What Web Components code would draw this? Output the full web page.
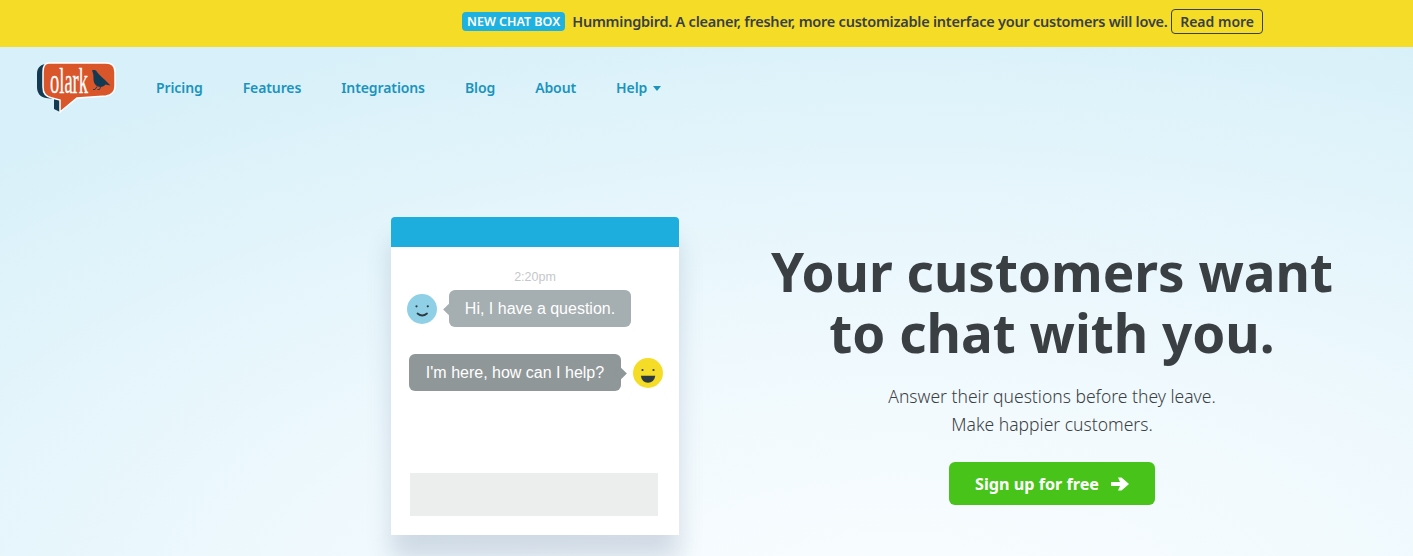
<!DOCTYPE html>
<html>
<head>
<meta charset="utf-8">
<title>Olark</title>
<style>
  html, body { margin: 0; height: 556px; overflow: hidden; }
  body {
    font-family: "Noto Sans", "Open Sans", sans-serif;
    background: radial-gradient(ellipse 1350px 620px at 900px 620px, #fafdff 0%, #eff9fd 45%, #dff3fa 85%, #d8f0f9 100%) #d8f0f9;
  }
  site-page { height: 556px; }
</style>
</head>
<body>
<site-page>
  <promo-bar slot="top" label="NEW CHAT BOX" link="Read more">Hummingbird. A cleaner, fresher, more customizable interface your customers will love.</promo-bar>
  <site-nav slot="top"></site-nav>
  <chat-demo slot="left"></chat-demo>
  <hero-copy slot="right"></hero-copy>
</site-page>

<script>
class SitePage extends HTMLElement {
  constructor() {
    super();
    this.attachShadow({ mode: 'open' });
    this.shadowRoot.innerHTML = `
      <style>
        :host { display: block; }
        .hero {
          display: grid;
          grid-template-columns: 288px 566px;
          column-gap: 90px;
          padding: 102px 0 0 391px;
          align-items: start;
        }
      </style>
      <slot name="top"></slot>
      <div class="hero">
        <slot name="left"></slot>
        <slot name="right"></slot>
      </div>
    `;
  }
}

class PromoBar extends HTMLElement {
  constructor() {
    super();
    this.attachShadow({ mode: 'open' });
    this.shadowRoot.innerHTML = `
      <style>
        :host {
          display: flex;
          align-items: center;
          height: 47px;
          box-sizing: border-box;
          padding: 0 0 5px 462px;
          background: #f5dd27;
          color: #3a3f44;
          font-size: 14.5px;
          font-weight: 600;
          white-space: nowrap;
        }
        .tag {
          background: #1fb2e0;
          color: #fff;
          font-size: 12.5px;
          line-height: 19px;
          padding: 0 5px;
          border-radius: 4px;
          margin-right: 7px;
        }
        .more {
          border: 1px solid #3a3f44;
          border-radius: 4px;
          line-height: 23px;
          padding: 0 8px;
          margin-left: 5px;
          font-size: 14px;
        }
        .msg { display: inline-block; width: 594px; letter-spacing: -0.24px; }
      </style>
      <span class="tag">${this.getAttribute('label')}</span>
      <span class="msg"><slot></slot></span>
      <span class="more">${this.getAttribute('link')}</span>
    `;
  }
}

class SiteNav extends HTMLElement {
  constructor() {
    super();
    this.attachShadow({ mode: 'open' });
    const items = ['Pricing', 'Features', 'Integrations', 'Blog', 'About'];
    this.shadowRoot.innerHTML = `
      <style>
        :host {
          display: flex;
          align-items: center;
          height: 55px;
          padding: 13px 0 0 36px;
          color: #1a94bd;
          font-size: 14px;
          font-weight: 600;
          letter-spacing: -0.1px;
        }
        svg.logo { display: block; margin-right: 40px; margin-top: 1px; overflow: visible; }
        nav { display: flex; gap: 40px; margin-top: -1px; }
        .caret {
          display: inline-block;
          margin-left: 6px;
          border: 4px solid transparent;
          border-top: 5px solid #1a94bd;
          border-bottom: 0;
          vertical-align: 2px;
        }
      </style>
      <svg class="logo" width="80" height="52" viewBox="0 0 80 52">
        <path d="M14 1 C5 2 1 5 1 12 V25 C1 31 4 35 10 36 L18 37 V47 L24 50 V30 Z" fill="#123a52"/>
        <path d="M13 1 H70 C76 1 79 4 79 10 V24 C79 30 76 33 70 34 L41 36 L24 50 V38 L16 36 C10 35 7 31 7 25 V10 C7 4 9 1 13 1 Z" fill="#d9552a" stroke="#fff" stroke-width="1.5"/>
        <text x="14" y="31" textLength="38" lengthAdjust="spacingAndGlyphs" font-family="Liberation Serif, serif" font-size="36" font-weight="400" letter-spacing="0" fill="#fff" stroke="#fff" stroke-width=".3">olark</text>
        <path d="M56 8.5 C58 7.5 60 8 61 10 C63 13 66 15 69 18 L74.5 23.5 L69.5 22.5 C68 24.5 65 25.5 62 24.5 C59 23.5 57.5 20 57.5 17 C57.5 14 57.5 11.5 56 8.5 Z" fill="#123a52"/>
        <path d="M61 24.5 L59 27.5 H57 M64.5 25 L63.5 27.5 H61.5" fill="none" stroke="#123a52" stroke-width=".9"/>
      </svg>
      <nav>
        ${items.map(item => `<span>${item}</span>`).join('')}
        <span>Help<i class="caret"></i></span>
      </nav>
    `;
  }
}

class ChatBubble extends HTMLElement {
  constructor() {
    super();
    this.attachShadow({ mode: 'open' });
    const side = this.getAttribute('side');
    this.shadowRoot.innerHTML = `
      <style>
        :host {
          display: flex;
          align-items: center;
          font-family: "Liberation Sans", Arial, sans-serif;
          font-size: 16px;
          color: #fff;
        }
        :host([side="them"]) { padding-left: 16px; }
        :host([side="me"]) { padding-left: 18px; }
        .text {
          position: relative;
          height: 37px;
          line-height: 37px;
          box-sizing: border-box;
          text-align: center;
          border-radius: 6px;
        }
        :host([side="them"]) .text { background: #a5aeb0; width: 182px; margin-left: 12px; }
        :host([side="me"]) .text { background: #8f9799; width: 212px; margin-right: 12px; }
        .text::after {
          content: "";
          position: absolute;
          top: 15px;
          width: 9px;
          height: 9px;
          transform: rotate(45deg);
          background: inherit;
        }
        :host([side="them"]) .text::after { left: -4px; }
        :host([side="me"]) .text::after { right: -4px; }
        svg { display: block; flex: none; }
        :host([side="me"]) svg { margin-top: 1px; }
      </style>
      ${side === 'them' ? this.faceCalm() : ''}
      <div class="text"><slot></slot></div>
      ${side === 'me' ? this.faceHappy() : ''}
    `;
  }

  faceCalm() {
    return `<svg width="30" height="30" viewBox="0 0 30 30">
      <circle cx="15" cy="15" r="15" fill="#90d0e6"/>
      <circle cx="9.5" cy="12.3" r="1.1" fill="#2d3a40"/>
      <circle cx="20.8" cy="12.3" r="1.1" fill="#2d3a40"/>
      <path d="M10.5 19.5 Q15.2 23.5 20 19.5" fill="none" stroke="#2d3a40" stroke-width="1.8" stroke-linecap="round"/>
    </svg>`;
  }

  faceHappy() {
    return `<svg width="30" height="30" viewBox="0 0 30 30">
      <circle cx="15" cy="15" r="15" fill="#f5dd27"/>
      <circle cx="9.5" cy="12" r="1.1" fill="#2d3a40"/>
      <circle cx="20.5" cy="12" r="1.1" fill="#2d3a40"/>
      <path d="M7.8 17.7 H22.3 Q21 24.7 15 24.7 Q9 24.7 7.8 17.7 Z" fill="#2d3a40"/>
    </svg>`;
  }
}

class ChatDemo extends HTMLElement {
  constructor() {
    super();
    this.attachShadow({ mode: 'open' });
    this.shadowRoot.innerHTML = `
      <style>
        :host {
          display: block;
          width: 288px;
          height: 318px;
          background: #fff;
          border-radius: 4px 4px 0 0;
          box-shadow: 0 24px 24px rgba(70, 90, 130, .2);
        }
        .head { height: 30px; background: #1daedd; border-radius: 4px 4px 0 0; }
        .time {
          font: 12.5px "Liberation Sans", Arial, sans-serif;
          color: #c4c8ca;
          text-align: center;
          padding-top: 23px;
          line-height: 15px;
        }
        .log { display: flex; flex-direction: column; gap: 27px; margin-top: 5px; }
        .input { height: 43px; margin: 82px 21px 0 19px; background: #eceeed; }
      </style>
      <div class="head"></div>
      <div class="time">2:20pm</div>
      <div class="log">
        <chat-bubble side="them">Hi, I have a question.</chat-bubble>
        <chat-bubble side="me">I'm here, how can I help?</chat-bubble>
      </div>
      <div class="input"></div>
    `;
  }
}

class HeroCopy extends HTMLElement {
  constructor() {
    super();
    this.attachShadow({ mode: 'open' });
    this.shadowRoot.innerHTML = `
      <style>
        :host {
          display: flex;
          flex-direction: column;
          align-items: center;
          width: 566px;
          color: #3a3f44;
          text-align: center;
        }
        h1 {
          margin: 24px 0 0;
          font-size: 53px;
          line-height: 61px;
          font-weight: 700;
          white-space: nowrap;
        }
        p {
          margin: 19px 0 0;
          font-size: 17.5px;
          line-height: 28px;
          font-weight: 300;
        }
        a {
          display: flex;
          align-items: center;
          justify-content: center;
          gap: 12px;
          width: 206px;
          height: 43px;
          margin-top: 24px;
          background: #48c31a;
          border-radius: 6px;
          color: #fff;
          font-size: 16.2px;
          font-weight: 700;
        }
        svg { display: block; }
      </style>
      <h1>Your customers want<br>to chat with you.</h1>
      <p>Answer their questions before they leave.<br>Make happier customers.</p>
      <a>Sign up for free
        <svg width="18" height="14" viewBox="0 0 18 14"><path d="M0 5 H9 L7 .5 H10.5 L18 7 L10.5 13.5 H7 L9 9 H0 Z" fill="#fff"/></svg>
      </a>
    `;
  }
}

customElements.define('site-page', SitePage);
customElements.define('promo-bar', PromoBar);
customElements.define('site-nav', SiteNav);
customElements.define('chat-bubble', ChatBubble);
customElements.define('chat-demo', ChatDemo);
customElements.define('hero-copy', HeroCopy);
</script>
</body>
</html>
